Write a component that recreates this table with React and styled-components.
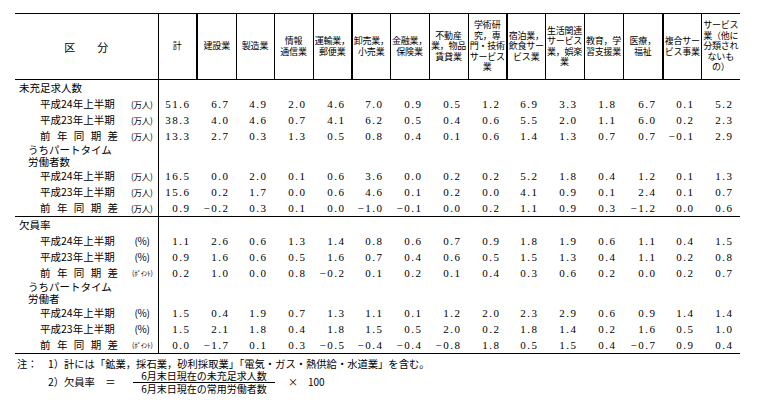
import React from 'react';
import styled, { createGlobalStyle } from 'styled-components';

const GlobalStyle = createGlobalStyle`
  body {
    margin: 0;
    background: #fff;
    color: #000;
    font-family: "Noto Sans CJK JP", "Noto Sans", sans-serif;
  }
`;

const Page = styled.div`
  width: 760px;
  height: 400px;
  box-sizing: border-box;
  padding: 13px 0 0 15px;
  overflow: hidden;
`;

const Table = styled.table`
  border-collapse: collapse;
  table-layout: fixed;
  width: 725px;
  border-top: 1px solid #000;
  border-bottom: 1px solid #000;
`;

const HeadCell = styled.th`
  height: 65px;
  padding: 0;
  font-weight: normal;
  font-size: 9px;
  line-height: 10.5px;
  letter-spacing: -0.2px;
  text-align: center;
  vertical-align: middle;
  white-space: nowrap;
  border-bottom: 1px solid #000;
  border-left: ${p => (p.$thick ? '2px' : '1px')} solid #000;
`;

const CornerCell = styled.th`
  padding: 0;
  font-weight: normal;
  font-size: 11px;
  text-align: center;
  vertical-align: middle;
  border-bottom: 1px solid #000;
  border-right: 1px solid #000;
  white-space: pre;
`;

const Row = styled.tr`
  border-top: ${p => (p.$divider ? '1px solid #000' : 'none')};
`;

const LabelCell = styled.td`
  padding: 0;
  height: ${p => (p.$tall ? '24px' : '16px')};
  border-right: 1px solid #000;
  vertical-align: middle;
`;

const LabelBox = styled.div`
  display: flex;
  align-items: center;
  justify-content: space-between;
  padding-left: ${p => p.$indent}px;
  padding-right: 5px;
  font-size: 10.5px;
  line-height: ${p => (p.$tall ? '12px' : '16px')};
  white-space: nowrap;
`;

const Spread = styled.span`
  letter-spacing: 6.4px;
`;

const Unit = styled.span`
  font-size: ${p => p.$size}px;
  margin-right: ${p => p.$gap || 0}px;
  letter-spacing: -0.3px;
`;

const NumCell = styled.td`
  padding: 0 6.5px 0 0;
  text-align: right;
  font-family: "Liberation Serif", "Times New Roman", serif;
  font-size: 11px;
  letter-spacing: 1.5px;
  line-height: 16px;
  white-space: nowrap;
`;

const Notes = styled.div`
  margin-top: 4px;
  padding-left: 2px;
  font-size: 10.3px;
`;

const NoteLine = styled.div`
  display: flex;
  align-items: center;
  line-height: 12px;
  white-space: nowrap;
`;

const NoteHead = styled.span`
  width: 31px;
  flex: none;
`;

const FormulaLabel = styled.span`
  width: 85px;
  flex: none;
  white-space: pre;
`;

const Fraction = styled.span`
  display: inline-flex;
  flex-direction: column;
  align-items: center;
  width: 142px;
  font-size: 10px;
`;

const Numerator = styled.span`
  align-self: stretch;
  text-align: center;
  line-height: 12px;
  border-bottom: 1px solid #000;
`;

const Denominator = styled.span`
  line-height: 11px;
`;

const Times = styled.span`
  margin-left: 13px;
  font-size: 10px;
  white-space: pre;
`;

const COLUMNS = [
  { w: 39, label: ['計'] },
  { w: 39, label: ['建設業'], thick: true },
  { w: 38, label: ['製造業'] },
  { w: 39, label: ['情報', '通信業'] },
  { w: 39, label: ['運輸業，', '郵便業'] },
  { w: 38, label: ['卸売業，', '小売業'], thick: true },
  { w: 39, label: ['金融業，', '保険業'] },
  { w: 39, label: ['不動産', '業，物品', '賃貸業'] },
  { w: 39, label: ['学術研', '究，専', '門・技術', 'サービス', '業'] },
  { w: 38, label: ['宿泊業，', '飲食サー', 'ビス業'], thick: true },
  { w: 39, label: ['生活関連', 'サービス', '業，娯楽', '業'] },
  { w: 39, label: ['教育，学', '習支援業'] },
  { w: 40, label: ['医療，', '福祉'] },
  { w: 38, label: ['複合サー', 'ビス事業'], thick: true },
  { w: 39, label: ['サービス', '業（他に', '分類され', 'ないも', 'の）'] },
];

const SECTIONS = [
  {
    title: '未充足求人数',
    sub: ['うちパートタイム', '労働者数'],
    unit: { text: '(万人)', size: 8.5 },
    diffUnit: { text: '(万人)', size: 8.5 },
    total: [
      [51.6, 6.7, 4.9, 2.0, 4.6, 7.0, 0.9, 0.5, 1.2, 6.9, 3.3, 1.8, 6.7, 0.1, 5.2],
      [38.3, 4.0, 4.6, 0.7, 4.1, 6.2, 0.5, 0.4, 0.6, 5.5, 2.0, 1.1, 6.0, 0.2, 2.3],
      [13.3, 2.7, 0.3, 1.3, 0.5, 0.8, 0.4, 0.1, 0.6, 1.4, 1.3, 0.7, 0.7, -0.1, 2.9],
    ],
    part: [
      [16.5, 0.0, 2.0, 0.1, 0.6, 3.6, 0.0, 0.2, 0.2, 5.2, 1.8, 0.4, 1.2, 0.1, 1.3],
      [15.6, 0.2, 1.7, 0.0, 0.6, 4.6, 0.1, 0.2, 0.0, 4.1, 0.9, 0.1, 2.4, 0.1, 0.7],
      [0.9, -0.2, 0.3, 0.1, 0.0, -1.0, -0.1, 0.0, 0.2, 1.1, 0.9, 0.3, -1.2, 0.0, 0.6],
    ],
  },
  {
    title: '欠員率',
    sub: ['うちパートタイム', '労働者'],
    unit: { text: '(%)', size: 10, gap: 3 },
    diffUnit: { text: '(ﾎﾟｲﾝﾄ)', size: 7 },
    total: [
      [1.1, 2.6, 0.6, 1.3, 1.4, 0.8, 0.6, 0.7, 0.9, 1.8, 1.9, 0.6, 1.1, 0.4, 1.5],
      [0.9, 1.6, 0.6, 0.5, 1.6, 0.7, 0.4, 0.6, 0.5, 1.5, 1.3, 0.4, 1.1, 0.2, 0.8],
      [0.2, 1.0, 0.0, 0.8, -0.2, 0.1, 0.2, 0.1, 0.4, 0.3, 0.6, 0.2, 0.0, 0.2, 0.7],
    ],
    part: [
      [1.5, 0.4, 1.9, 0.7, 1.3, 1.1, 0.1, 1.2, 2.0, 2.3, 2.9, 0.6, 0.9, 1.4, 1.4],
      [1.5, 2.1, 1.8, 0.4, 1.8, 1.5, 0.5, 2.0, 0.2, 1.8, 1.4, 0.2, 1.6, 0.5, 1.0],
      [0.0, -1.7, 0.1, 0.3, -0.5, -0.4, -0.4, -0.8, 1.8, 0.5, 1.5, 0.4, -0.7, 0.9, 0.4],
    ],
  },
];

const fmt = v => (v < 0 ? '−' + Math.abs(v).toFixed(1) : v.toFixed(1));

const EmptyCells = () => COLUMNS.map((_, i) => <NumCell key={i} />);

const DataRows = ({ rows, unit, diffUnit, prefix }) => {
  const labels = ['平成24年上半期', '平成23年上半期', null];
  return rows.map((values, r) => {
    const u = r === 2 ? diffUnit : unit;
    return (
      <Row key={prefix + r}>
        <LabelCell>
          <LabelBox $indent={25}>
            {labels[r] ? <span>{labels[r]}</span> : <Spread>前年同期差</Spread>}
            <Unit $size={u.size} $gap={u.gap}>{u.text}</Unit>
          </LabelBox>
        </LabelCell>
        {values.map((v, i) => (
          <NumCell key={i}>{fmt(v)}</NumCell>
        ))}
      </Row>
    );
  });
};

const Section = ({ section, first }) => (
  <>
    <Row $divider={!first}>
      <LabelCell>
        <LabelBox $indent={4}>{section.title}</LabelBox>
      </LabelCell>
      <EmptyCells />
    </Row>
    <DataRows rows={section.total} unit={section.unit} diffUnit={section.diffUnit} prefix="t" />
    <Row>
      <LabelCell $tall>
        <LabelBox $indent={13} $tall>
          <span>
            {section.sub[0]}
            <br />
            {section.sub[1]}
          </span>
        </LabelBox>
      </LabelCell>
      <EmptyCells />
    </Row>
    <DataRows rows={section.part} unit={section.unit} diffUnit={section.diffUnit} prefix="p" />
  </>
);

export default function App() {
  return (
    <Page>
      <GlobalStyle />
      <Table>
        <colgroup>
          <col style={{ width: 143 }} />
          {COLUMNS.map((c, i) => (
            <col key={i} style={{ width: c.w }} />
          ))}
        </colgroup>
        <thead>
          <tr>
            <CornerCell>{'区　　分'}</CornerCell>
            {COLUMNS.map((c, i) => (
              <HeadCell key={i} $thick={c.thick}>
                {c.label.map((line, j) => (
                  <React.Fragment key={j}>
                    {j > 0 && <br />}
                    {line}
                  </React.Fragment>
                ))}
              </HeadCell>
            ))}
          </tr>
        </thead>
        <tbody>
          {SECTIONS.map((s, i) => (
            <Section key={i} section={s} first={i === 0} />
          ))}
        </tbody>
      </Table>
      <Notes>
        <NoteLine>
          <NoteHead>注：</NoteHead>
          <span>1）計には「鉱業，採石業，砂利採取業」「電気・ガス・熱供給・水道業」を含む。</span>
        </NoteLine>
        <NoteLine>
          <NoteHead />
          <FormulaLabel>{'2）欠員率　＝'}</FormulaLabel>
          <Fraction>
            <Numerator>6月末日現在の未充足求人数</Numerator>
            <Denominator>6月末日現在の常用労働者数</Denominator>
          </Fraction>
          <Times>{'×　100'}</Times>
        </NoteLine>
      </Notes>
    </Page>
  );
}
